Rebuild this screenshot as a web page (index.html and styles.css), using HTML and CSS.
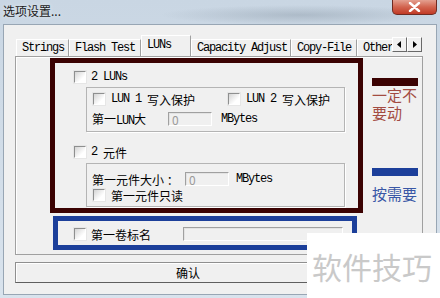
FILE: index.html
```html
<!DOCTYPE html>
<html lang="zh-CN">
  <head>
    <meta charset="utf-8" />
    <title>选项设置</title>
    <link rel="stylesheet" href="styles.css">
  </head>
  <body>
    <div class="window">
      <div class="titlebar">
        <span class="title">选项设置...</span>
        <span class="close">
          <svg width="13" height="10" viewBox="0 0 13 10"><path d="M2 1 L11 9 M11 1 L2 9" stroke="#fff" stroke-width="2.4" stroke-linecap="round"/></svg>
        </span>
      </div>
      <div class="client">
        <div class="page">
          <div class="tabrow">
            <div class="tablist">
              <span class="tab en w53">Strings</span>
              <span class="tab en w72">Flash Test</span>
              <span class="tab en w50 active">LUNs</span>
              <span class="tab en w100">Capacity Adjust</span>
              <span class="tab en w66">Copy-File</span>
              <span class="tab en w60">Other</span>
            </div>
            <div class="arrows">
              <span class="arrow"><svg width="5" height="7" viewBox="0 0 5 7"><polygon points="4,0 4,7 0,3.5" fill="#000"/></svg></span>
              <span class="arrow"><svg width="5" height="7" viewBox="0 0 5 7"><polygon points="1,0 1,7 5,3.5" fill="#000"/></svg></span>
            </div>
          </div>
          <div class="panel">
            <div class="boxes">
              <div class="fixed">
                <label class="row top-row"><span class="cb"></span><span class="en">2&nbsp;LUNs</span></label>
                <div class="group g1">
                  <div class="row check-row">
                    <label class="lun1"><span class="cb"></span><span class="en">LUN&nbsp;1&nbsp;</span>写入保护</label>
                    <label><span class="cb"></span><span class="en">LUN&nbsp;2&nbsp;</span>写入保护</label>
                  </div>
                  <div class="row size-row">
                    <span class="lbl lun-lbl">第一<span class="en">LUN</span>大</span>
                    <span class="field w44">0</span>
                    <span class="en unit">MBytes</span>
                  </div>
                </div>
                <label class="row part-row"><span class="cb"></span><span class="en">2&nbsp;</span>元件</label>
                <div class="group g2">
                  <div class="row size-row2">
                    <span class="lbl part-lbl">第一元件大小 ：</span>
                    <span class="field w44">0</span>
                    <span class="en unit2">MBytes</span>
                  </div>
                  <label class="row ro-row"><span class="cb"></span>第一元件只读</label>
                </div>
              </div>
              <div class="optional">
                <label class="row"><span class="cb"></span><span class="vol-lbl">第一卷标名</span></label>
                <span class="field w160"></span>
              </div>
            </div>
            <div class="legend">
              <div class="bar maroon"></div>
              <div class="note red">一定不<br>要动</div>
              <div class="bar blue"></div>
              <div class="note bluetext">按需要</div>
            </div>
          </div>
          <div class="ok">确认</div>
        </div>
      </div>
      <div class="watermark">软件技巧</div>
    </div>
  </body>
</html>
```

FILE: styles.css
```css
body {
  margin: 0;
  font-family: "Noto Sans CJK SC", sans-serif;
  font-size: 12px;
  color: #000;
}
.window {
  position: relative;
  width: 440px;
  height: 298px;
  overflow: hidden;
  background:
    radial-gradient(ellipse 140px 10px at 300px 15px, rgba(120, 135, 150, 0.35), transparent),
    linear-gradient(180deg, #c9d6e3, #d9e3ed);
}
.en {
  font-family: "Liberation Mono", monospace;
  letter-spacing: -1.2px;
}
.titlebar {
  height: 24px;
  display: flex;
  justify-content: space-between;
  align-items: flex-start;
}
.title {
  padding: 2px 0 0 3px;
  font-size: 12px;
  color: #1a1a1a;
  text-shadow: 0 0 4px #e8eef4;
}
.close {
  width: 43px;
  height: 14px;
  margin-right: 3px;
  display: flex;
  justify-content: center;
  align-items: center;
  background: linear-gradient(180deg, #e4a090, #d2644f 50%, #c13a25);
  border: 1px solid #6e2b22;
  border-top: 0;
  border-radius: 0 0 5px 5px;
}
.client {
  margin-left: 3px;
  width: 434px;
  height: 271px;
  box-sizing: border-box;
  border: 1px solid #98a6b4;
  background: #f0f0f0;
}
.page {
  margin-left: 11px;
  width: 408px;
}
.tabrow {
  height: 31px;
  display: flex;
}
.tablist {
  width: 376px;
  margin-left: 1px;
  display: flex;
  align-items: flex-end;
  overflow: hidden;
}
.tab {
  flex: none;
  height: 17px;
  box-sizing: border-box;
  padding-left: 5px;
  display: flex;
  align-items: center;
  border-top: 1px solid #fff;
  border-left: 1px solid #fff;
  border-right: 1px solid #a0a0a0;
  white-space: nowrap;
}
.tab.active {
  position: relative;
  z-index: 1;
  height: 22px;
  margin-bottom: -1px;
  padding-bottom: 3px;
  background: #f0f0f0;
}
.w53 { width: 53px; }
.w72 { width: 72px; }
.w50 { width: 50px; }
.w100 { width: 100px; }
.w66 { width: 66px; }
.w60 { width: 60px; }
.arrows {
  display: flex;
  margin-top: 12px;
}
.arrow {
  width: 15px;
  height: 15px;
  box-sizing: border-box;
  display: flex;
  justify-content: center;
  align-items: center;
  background: #f0f0f0;
  border: 1px solid #fff;
  border-right-color: #696969;
  border-bottom-color: #696969;
}
.panel {
  width: 408px;
  height: 199px;
  box-sizing: border-box;
  border: 1px solid #a0a0a0;
  box-shadow: inset 1px 1px #fff;
  padding: 1px 0 0 34px;
  display: flex;
}
.boxes {
  display: flex;
  flex-direction: column;
}
.fixed {
  width: 313px;
  height: 155px;
  box-sizing: border-box;
  border: 5px solid #3b0202;
}
.row {
  display: flex;
  align-items: center;
  height: 14px;
}
.cb {
  width: 12px;
  height: 12px;
  box-sizing: border-box;
  margin-right: 5px;
  border: 1px solid #fff;
  border-top-color: #8e8f8f;
  border-left-color: #8e8f8f;
  background: linear-gradient(135deg, #d4d4d4, #fff 70%);
  box-shadow: 0 0 0 1px #e6e6e6;
  flex: none;
}
.top-row {
  margin-top: 7px;
  padding-left: 19px;
}
.group {
  margin-left: 31px;
  width: 259px;
  box-sizing: border-box;
  border: 1px solid #b4b4b4;
  box-shadow: 1px 1px #fff;
}
.g1 {
  margin-top: 3px;
  height: 45px;
}
.check-row {
  margin-top: 4px;
  padding-left: 6px;
}
.check-row .cb {
  margin-right: 6px;
}
.check-row label {
  display: flex;
  align-items: center;
}
.lun1 {
  width: 135px;
}
.size-row {
  margin-top: 6px;
  padding-left: 5px;
}
.lun-lbl {
  width: 76px;
}
.field {
  height: 14px;
  box-sizing: border-box;
  padding-left: 3px;
  display: flex;
  align-items: center;
  color: #9a9a9a;
  background: #f0f0f0;
  border: 1px solid #fff;
  border-top-color: #a0a0a0;
  border-left-color: #a0a0a0;
  box-shadow: inset 1px 1px #e3e3e3;
}
.w44 { width: 44px; }
.w160 { width: 160px; }
.unit { margin-left: 9px; }
.unit2 { margin-left: 7px; }
.part-row {
  margin-top: 13px;
  padding-left: 19px;
}
.g2 {
  margin-top: 4px;
  height: 44px;
}
.size-row2 {
  margin-top: 8px;
  padding-left: 5px;
}
.part-lbl {
  width: 93px;
}
.ro-row {
  margin-top: 2px;
  padding-left: 6px;
}
.ro-row .cb {
  margin-right: 6px;
}
.optional {
  margin: 3px 0 0 3px;
  width: 304px;
  height: 34px;
  box-sizing: border-box;
  border: 5px solid #1c3f9a;
  padding: 6px 0 0 16px;
  display: flex;
  align-items: flex-start;
}
.vol-lbl {
  width: 92px;
}
.legend {
  margin: 20px 0 0 9px;
  width: 46px;
}
.bar {
  height: 8px;
}
.maroon {
  background: #3b0202;
}
.blue {
  margin-top: 46px;
  background: #1c3f9a;
}
.note {
  font-size: 15px;
  line-height: 18px;
}
.red {
  height: 36px;
  color: #a34c42;
}
.bluetext {
  margin-top: 9px;
  color: #3957a6;
}
.ok {
  margin-top: 7px;
  width: 346px;
  height: 21px;
  box-sizing: border-box;
  display: flex;
  justify-content: center;
  align-items: center;
  border: 1px solid #8f8f8f;
  border-right-color: #5f5f5f;
  border-bottom-color: #5f5f5f;
  box-shadow: inset 1px 1px #fff;
}
.watermark {
  position: absolute;
  left: 307px;
  top: 233px;
  width: 133px;
  height: 65px;
  box-sizing: border-box;
  padding-left: 5px;
  display: flex;
  align-items: center;
  background: #fff;
  color: #c9c9c9;
  font-size: 30px;
}
```
